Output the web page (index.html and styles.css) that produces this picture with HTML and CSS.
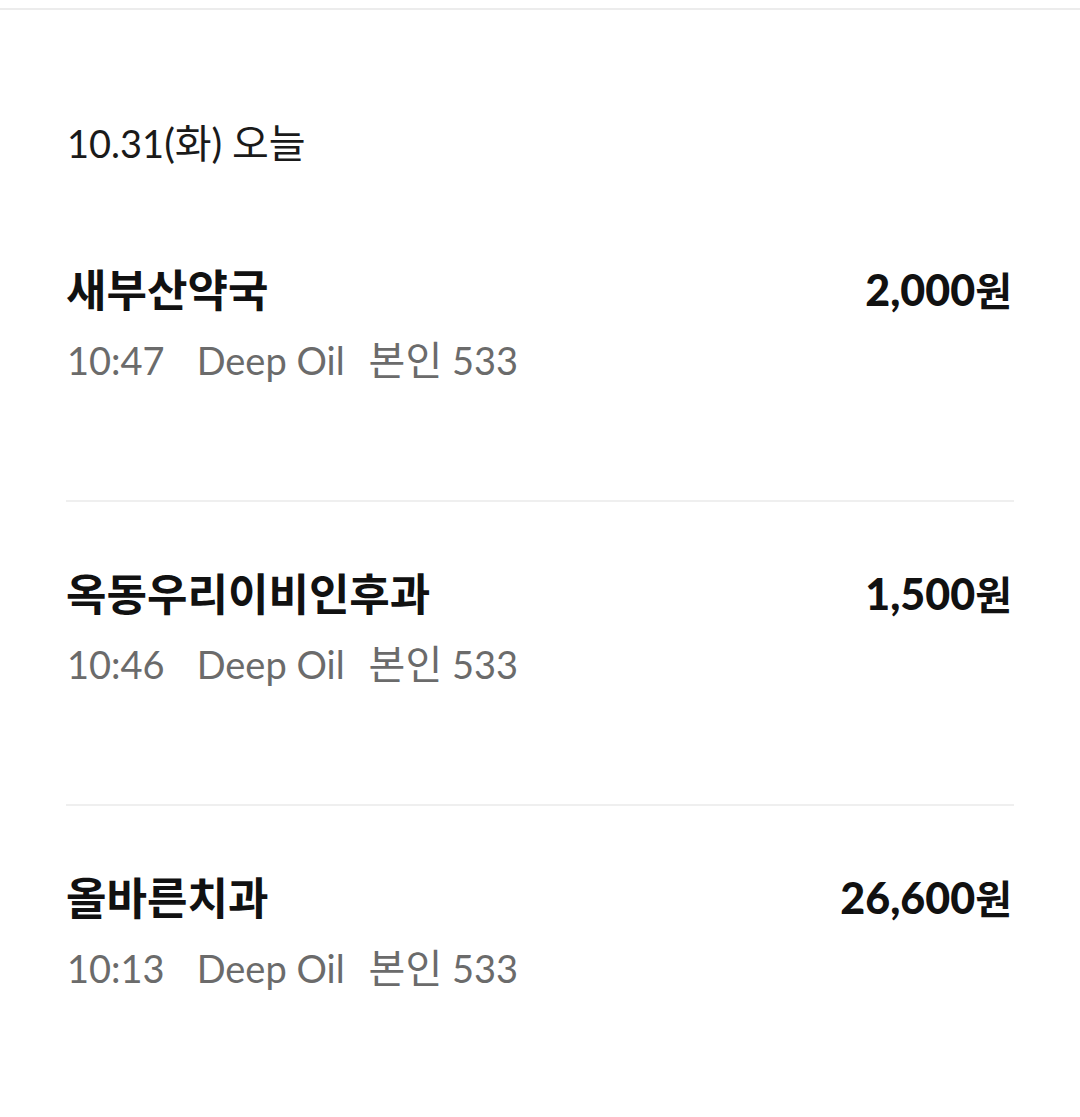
FILE: index.html
```html
<!DOCTYPE html>
<html lang="ko">
<head>
<meta charset="utf-8">
<link rel="stylesheet" href="styles.css">
</head>
<body>
<div class="topbar"></div>
<main class="page">
  <div class="date">10.31<span class="ko">(화)</span> <span class="ko">오늘</span></div>
  <ul class="list">
    <li class="item">
      <div class="row">
        <span class="name">새부산약국</span>
        <span class="amount">2,000<span class="won">원</span></span>
      </div>
      <div class="meta"><span class="time">10:47</span><span class="card">Deep Oil</span><span class="ko">본인</span> 533</div>
    </li>
    <li class="item">
      <div class="row">
        <span class="name">옥동우리이비인후과</span>
        <span class="amount">1,500<span class="won">원</span></span>
      </div>
      <div class="meta"><span class="time">10:46</span><span class="card">Deep Oil</span><span class="ko">본인</span> 533</div>
    </li>
    <li class="item">
      <div class="row">
        <span class="name">올바른치과</span>
        <span class="amount">26,600<span class="won">원</span></span>
      </div>
      <div class="meta"><span class="time">10:13</span><span class="card">Deep Oil</span><span class="ko">본인</span> 533</div>
    </li>
  </ul>
</main>
</body>
</html>
```
FILE: styles.css
```css
html, body {
  margin: 0;
  padding: 0;
  background: #ffffff;
}
body {
  font-family: "Lato", "Noto Sans CJK KR", sans-serif;
  color: #111111;
  width: 1080px;
  height: 1117px;
  overflow: hidden;
}
.topbar {
  height: 8px;
  border-bottom: 2px solid #ececec;
}
.page {
  margin: 0 66px;
}
.date {
  margin-top: 108px;
  height: 50px;
  line-height: 50px;
  font-size: 38px;
  color: #1a1a1a;
  padding-left: 1px;
}
.date .ko {
  font-size: 40px;
}
.list {
  list-style: none;
  margin: 30px 0 0;
  padding: 0;
}
.item {
  padding: 67px 0 115px;
}
.item + .item {
  border-top: 2px solid #efefef;
}
.row {
  display: flex;
  justify-content: space-between;
  align-items: center;
  height: 50px;
  line-height: 50px;
}
.name {
  font-size: 44px;
  font-weight: 700;
  color: #111111;
}
.amount {
  font-size: 43px;
  font-weight: 900;
  color: #111111;
  padding-right: 2px;
}
.won {
  font-size: 40px;
  font-weight: 700;
}
.meta {
  margin-top: 20px;
  height: 50px;
  line-height: 50px;
  font-size: 38px;
  color: #6b6b6b;
  padding-left: 1px;
}
.meta .ko {
  font-size: 40px;
}
.time {
  margin-right: 32px;
}
.card {
  margin-right: 24px;
}
```
